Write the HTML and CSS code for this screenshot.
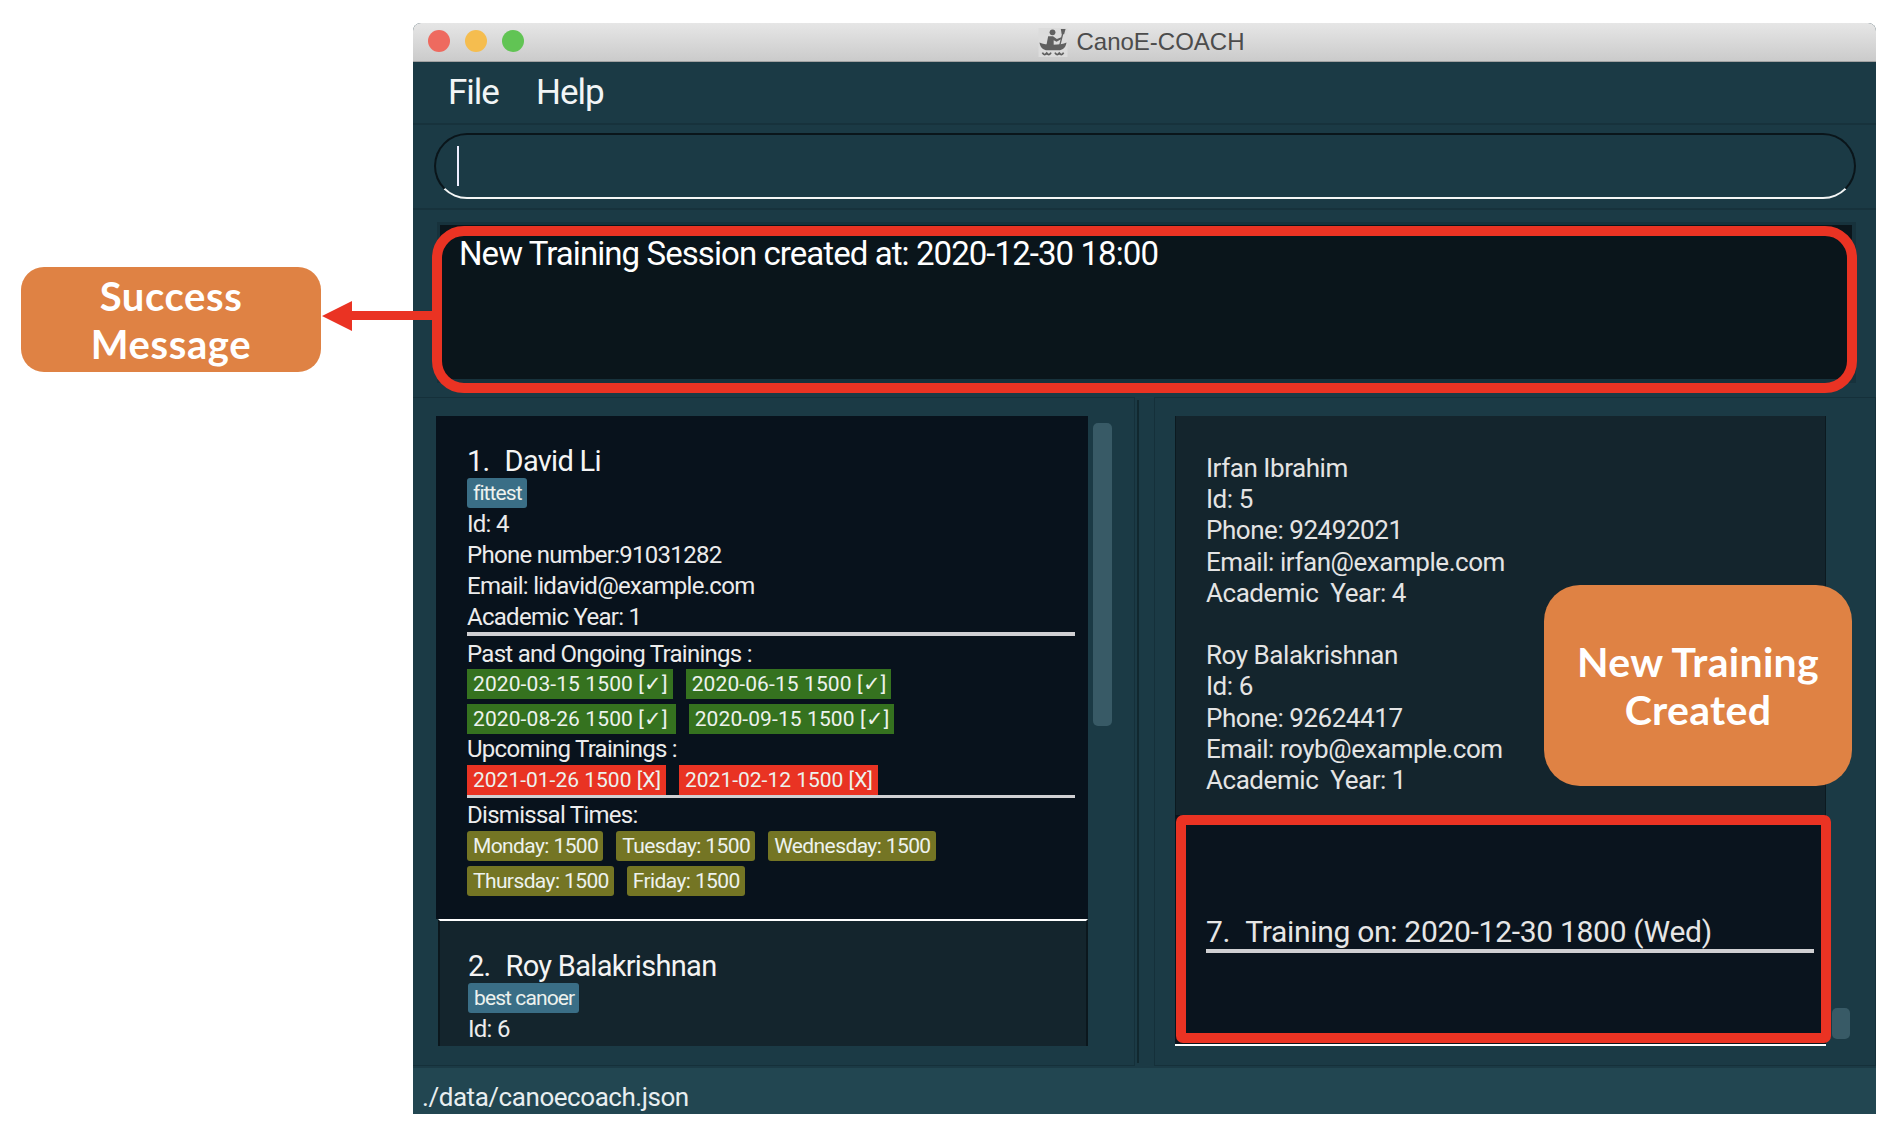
FILE: index.html
```html
<!DOCTYPE html>
<html lang="en">
<head>
<meta charset="utf-8">
<title>CanoE-COACH</title>
<link rel="stylesheet" href="styles.css">
</head>
<body>
<div class="stage">
  <div class="callout callout-success">Success<br>Message</div>
  <svg class="arrow" viewBox="0 0 112 32" aria-hidden="true"><path d="M0 16 30 1V11H112V20H30V31Z"/></svg>

  <div class="window">
    <header class="titlebar">
      <div class="lights"><i class="light red"></i><i class="light yellow"></i><i class="light green"></i></div>
      <div class="title">
        <svg class="app-icon" viewBox="0 0 30 30" aria-hidden="true">
          <rect width="30" height="30" fill="#dcdcdc"/>
          <g fill="#606060">
            <circle cx="14.500" cy="4.500" r="3"/>
            <path d="M10 8.500h5l4 3 4.500-2 .7 1.700-5.500 3-3-1.500v4.800h-7.500z"/>
            <path d="M23 1h5l-1.500 5.500h-2.500z"/>
            <path d="M24.300 6h1.400l-3.700 15h-1.400z"/>
            <path d="M1 15c6 3 22 3 28 0-1 6-4.500 8-8 8h-12c-3.500 0-7-2-8-8z"/>
          </g>
          <path d="M4 25.500c1.500 2.500 3 2.500 4.500.5 1.500 2 3 2 4.500-.5M17 25.500c1.500 2.500 3 2.500 4.500.5 1.500 2 3 2 4.500-.5" fill="none" stroke="#606060" stroke-width="1.800"/>
        </svg>
        <span>CanoE-COACH</span>
      </div>
    </header>

    <nav class="menubar"><span>File</span><span>Help</span></nav>

    <section class="command"><div class="pill"><i class="caret"></i></div></section>

    <section class="result">
      <div class="result-box">New Training Session created at: 2020-12-30 18:00</div>
    </section>

    <main class="lower">
      <section class="panel panel-left">
        <div class="list list-left">
          <article class="card card-active">
            <h2 class="name"><span class="num">1.</span>David Li</h2>
            <div class="chips tag-row"><span class="chip tag">fittest</span></div>
            <p class="line">Id: 4</p>
            <p class="line">Phone number:91031282</p>
            <p class="line">Email: lidavid@example.com</p>
            <p class="line">Academic Year: 1</p>
            <hr class="rule rule-first">
            <p class="line line-heading">Past and Ongoing Trainings :</p>
            <div class="chips">
              <span class="chip past">2020-03-15 1500 [✓]</span>
              <span class="chip past">2020-06-15 1500 [✓]</span>
              <span class="chip past past-wide">2020-08-26 1500 [✓]</span>
              <span class="chip past">2020-09-15 1500 [✓]</span>
            </div>
            <p class="line">Upcoming Trainings :</p>
            <div class="chips">
              <span class="chip upcoming">2021-01-26 1500 [X]</span>
              <span class="chip upcoming">2021-02-12 1500 [X]</span>
            </div>
            <hr class="rule rule-thin">
            <p class="line line-dismissal">Dismissal Times:</p>
            <div class="chips">
              <span class="chip time">Monday: 1500</span>
              <span class="chip time">Tuesday: 1500</span>
              <span class="chip time">Wednesday: 1500</span>
              <span class="chip time">Thursday: 1500</span>
              <span class="chip time">Friday: 1500</span>
            </div>
          </article>
          <article class="card card-next">
            <h2 class="name"><span class="num">2.</span>Roy Balakrishnan</h2>
            <div class="chips tag-row"><span class="chip tag">best canoer</span></div>
            <p class="line">Id: 6</p>
          </article>
        </div>
        <div class="thumb thumb-left"></div>
      </section>

      <div class="splitter"><i class="splitter-line"></i></div>

      <section class="panel panel-right">
        <div class="list list-right">
          <article class="training">
            <p class="line">Irfan Ibrahim</p>
            <p class="line">Id: 5</p>
            <p class="line">Phone: 92492021</p>
            <p class="line">Email: irfan@example.com</p>
            <p class="line">Academic&nbsp; Year: 4</p>
            <p class="line">&nbsp;</p>
            <p class="line">Roy Balakrishnan</p>
            <p class="line">Id: 6</p>
            <p class="line">Phone: 92624417</p>
            <p class="line">Email: royb@example.com</p>
            <p class="line">Academic&nbsp; Year: 1</p>
          </article>
          <article class="session">
            <h2 class="session-title"><span class="num">7.</span>Training on: 2020-12-30 1800 (Wed)</h2>
            <hr class="rule">
          </article>
        </div>
        <div class="thumb thumb-right"></div>
      </section>
    </main>

    <footer class="status">./data/canoecoach.json</footer>
  </div>

  <div class="frame frame-result"></div>
  <div class="frame frame-session"></div>
  <div class="callout callout-training">New Training<br>Created</div>
</div>
</body>
</html>
```

FILE: styles.css
```css
* { box-sizing: border-box; }
html, body { margin: 0; height: 100%; background: #fff; overflow: hidden; }
body { font-family: Roboto, "Liberation Sans", sans-serif; color: #ececec; }

.stage { position: relative; display: flex; height: 1134px; padding: 23px 18px 20px 413px; }

.window { flex: 1; display: flex; flex-direction: column; background: #1b3a45; border-radius: 8px 8px 0 0; overflow: hidden; }

/* title bar */
.titlebar { position: relative; flex: 0 0 39px; display: flex; align-items: center; justify-content: center; background: linear-gradient(#e6e6e6, #cbcbcb); border-bottom: 1px solid #a2a2a2; }
.lights { position: absolute; left: 15px; top: 7px; display: flex; gap: 15px; }
.light { width: 22px; height: 22px; border-radius: 50%; }
.red { background: #ee6a5f; }
.yellow { background: #f5bd4f; }
.green { background: #61c454; }
.title { display: flex; align-items: center; gap: 8px; padding-right: 6px; font: 24px/30px "Liberation Sans", Arial, sans-serif; color: #4c4c4c; }
.app-icon { width: 30px; height: 29px; }

/* menu */
.menubar { flex: 0 0 61px; display: flex; gap: 37px; padding: 0 0 1px 35px; align-items: center; font-size: 35px; letter-spacing: -1px; color: #f2f5f6; }

/* command */
.command { flex: 0 0 87px; padding: 8px 20px 9px 21px; border-top: 2px solid #17323c; border-bottom: 2px solid #17323c; }
.pill { height: 66px; border: 2px solid #0a151a; border-bottom-color: #f4f6f6; border-radius: 33px; padding: 11px 0 0 21px; }
.caret { display: block; width: 2px; height: 40px; background: #eef; }

/* result */
.result { flex: 0 0 183px; padding: 12px 20px 10px 24px; }
.result-box { height: 161px; padding: 9px 0 0 19px; background: #0a151b; border: solid #17323c; border-width: 3px 4px 4px 3px; font-size: 33px; line-height: 40px; letter-spacing: -.93px; color: #fff; }

/* lower */
.lower { flex: 0 0 675px; display: flex; padding: 4px 0 2px; }
.panel { display: flex; align-items: flex-start; border: 1px solid #15303a; padding-top: 18px; }
.panel-left { flex: 0 0 722px; padding-left: 23px; border-left: 0; }
.panel-right { flex: 1; padding-left: 20px; }
.splitter { flex: 0 0 19px; padding: 3px 0 3px 2px; }
.splitter-line { display: block; width: 2px; height: 100%; background: #11282f; }
.list { height: 630px; overflow: hidden; flex: none; }
.list-left { width: 652px; }
.list-right { width: 651px; }
.thumb { flex: none; background: #385a66; border-radius: 5px; }
.thumb-left { width: 19px; height: 303px; margin: 7px 0 0 5px; }
.thumb-right { width: 18px; height: 31px; margin: 592px 0 0 6px; }

/* person cards */
.card { padding: 0 13px 0 31px; }
.card-active { height: 503px; padding-top: 27px; background: #08121c; }
.card-next { height: 127px; margin: 0 0 0 2px; padding: 27px 12px 0 28px; background: #14252d; border: solid #0b171d; border-width: 2px 2px 0; border-top-color: #fff; }
.name { margin: 0; font-size: 29px; font-weight: 400; line-height: 37px; letter-spacing: -.7px; color: #f4f4f4; }
.num { margin-right: 15px; }
.line { margin: 0; font-size: 24px; line-height: 31px; letter-spacing: -.72px; color: #ececec; }
.line-heading { margin: 3px 0 -1px; }
.line-dismissal { margin: 1px 0 -1px; line-height: 33px; }
.rule { display: block; height: 4px; margin: 0; border: 0; background: #d0d0d3; }
.rule-first { margin-top: -1px; }
.rule-thin { height: 3px; }

/* chips */
.chips { display: flex; flex-wrap: wrap; gap: 5px 13px; }
.tag-row { margin-bottom: 1px; }
.chip { height: 30px; padding: 0 5px 0 6px; font-size: 21px; line-height: 30px; letter-spacing: -.6px; color: #edf2ee; white-space: nowrap; }
.tag { margin-top: -2px; background: #3a6e86; border-radius: 3px; letter-spacing: -.9px; }
.past { background: #35721f; letter-spacing: .1px; }
.past-wide { padding-right: 8px; }
.upcoming { background: #e93323; letter-spacing: 0; }
.time { background: #747524; border-radius: 3px; }

/* training panel */
.training { height: 399px; padding: 37px 12px 0 30px; background: #14252d; border: solid #0c1a20; border-width: 0 1px; }
.training .line { font-size: 26px; line-height: 31.2px; letter-spacing: -.45px; color: #e4e4e4; }
.session { height: 231px; padding: 100px 12px 0 31px; background: #0a141e; border-bottom: 2px solid #fff; }
.session-title { margin: 0; font-size: 30px; font-weight: 400; line-height: 34px; letter-spacing: -.3px; color: #e6e6e6; }

/* status */
.status { flex: 0 0 46px; padding: 14px 0 0 9px; background: #224651; font-size: 26px; line-height: 30px; letter-spacing: -.45px; color: #e8eef0; overflow: hidden; white-space: nowrap; }

/* annotations */
.frame { position: absolute; border: 10px solid #ea3323; }
.frame-result { left: 432px; top: 226px; width: 1425px; height: 167px; border-radius: 32px; }
.frame-session { left: 1176px; top: 815px; width: 655px; height: 228px; border-radius: 7px; }
.callout { position: absolute; display: flex; align-items: center; justify-content: center; text-align: center; background: #df8244; color: #fff; font-family: Lato, "Open Sans", sans-serif; font-weight: 700; }
.callout-success { left: 21px; top: 267px; width: 300px; height: 105px; border-radius: 23px; font-size: 40px; line-height: 48px; letter-spacing: .6px; }
.callout-training { left: 1544px; top: 585px; width: 308px; height: 201px; border-radius: 36px; font-size: 41px; line-height: 48px; letter-spacing: .3px; }
.arrow { position: absolute; left: 322px; top: 300px; width: 112px; height: 32px; fill: #ea3323; }
```
